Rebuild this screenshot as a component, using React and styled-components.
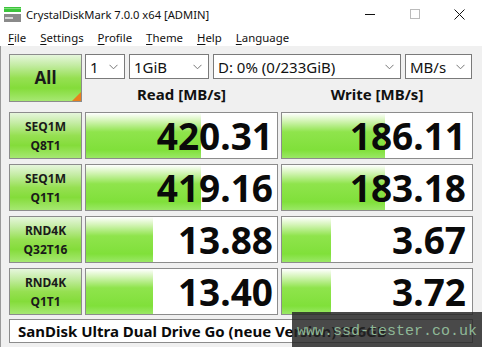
import React from 'react'
import styled, { createGlobalStyle } from 'styled-components'

const Global = createGlobalStyle`
  html, body { margin: 0; padding: 0; background: #fff; }
  body { font-family: "Noto Sans", "Open Sans", sans-serif; }
`

const Window = styled.div`
  width: 482px;
  height: 347px;
  background: #fff;
  position: relative;
  overflow: hidden;
  display: flex;
  flex-direction: column;
`

const TitleBar = styled.div`
  height: 28px;
  display: flex;
  align-items: center;
  padding-left: 4px;
  font-size: 11.2px;
  color: #111;
  .title { margin-left: 5px; flex: 1; }
`

const WinBtn = styled.div`
  width: 45px;
  height: 28px;
  display: flex;
  align-items: center;
  justify-content: center;
`

const MenuBar = styled.div`
  height: 18px;
  display: flex;
  align-items: center;
  padding-left: 1px;
  font-size: 11.4px;
  color: #111;
  span {
    padding: 0 7px;
  }
  u { text-decoration: underline; text-underline-offset: 2px; }
`

const Main = styled.div`
  flex: 1;
  background: #f0f0f0;
  border-left: 1px solid #9a9a9a;
  padding: 8px 0 0 8px;
  display: flex;
  flex-direction: column;
`

const Grid = styled.div`
  display: grid;
  grid-template-columns: 73px 193px 192px;
  column-gap: 3px;
`

const Controls = styled.div`
  grid-column: 2 / 4;
  display: grid;
  grid-template-columns: 193px 192px;
  column-gap: 3px;
  grid-template-rows: 25px 28px;
`

const Selects = styled.div`
  grid-column: 1 / 3;
  display: flex;
  gap: 4px;
`

const Select = styled.div`
  width: ${p => p.w}px;
  height: 25px;
  box-sizing: border-box;
  background: #fff;
  border: 1px solid #7a7a7a;
  display: flex;
  align-items: center;
  padding: 0 6px 0 4px;
  font-size: 15px;
  color: #111;
  span { flex: 1; white-space: nowrap; }
`

const Header = styled.div`
  display: flex;
  align-items: center;
  justify-content: center;
  font-size: 15px;
  font-weight: 700;
  color: #111;
  padding-top: 2px;
`

const GreenButton = styled.div`
  box-sizing: border-box;
  height: ${p => p.h}px;
  border: 1px solid #8c8c8c;
  background: linear-gradient(to bottom, #e6f6dc 0%, #c4eca4 22%, #96e052 50%, #84dc3a 72%, #a6e872 100%);
  position: relative;
  display: flex;
  flex-direction: column;
  align-items: center;
  justify-content: center;
  font-weight: 700;
  color: #1a1a1a;
  font-size: ${p => p.fs}px;
  line-height: ${p => p.lh}px;
`

const Corner = styled.div`
  position: absolute;
  right: 0;
  bottom: 0;
  width: 0;
  height: 0;
  border-left: 9px solid transparent;
  border-bottom: 9px solid #e8801e;
`

const Rows = styled.div`
  display: grid;
  grid-template-columns: 73px 193px 192px;
  column-gap: 3px;
  row-gap: 5px;
  margin-top: 5px;
`

const Cell = styled.div`
  box-sizing: border-box;
  height: 47px;
  border: 1px solid #8c8c8c;
  background: #fff;
  position: relative;
  display: flex;
  align-items: center;
  justify-content: flex-end;
  padding-right: ${p => p.pr}px;
`

const Bar = styled.div`
  position: absolute;
  left: 0;
  top: 0;
  bottom: 0;
  background: linear-gradient(to bottom, #ffffff 0%, #d2f4b4 18%, #8fe44c 42%, #80e03a 82%, #9ae866 100%);
`

const Value = styled.div`
  position: relative;
  font-size: 37px;
  font-weight: 700;
  color: #0a0a0a;
  line-height: 1;
`

const Footer = styled.div`
  box-sizing: border-box;
  width: 464px;
  height: 24px;
  margin-top: 4px;
  background: #fff;
  border: 1px solid #8c8c8c;
  display: flex;
  align-items: center;
  padding-left: 8px;
  font-size: 15px;
  font-weight: 700;
  color: #0a0a0a;
  white-space: nowrap;
`

const Watermark = styled.div`
  position: absolute;
  left: 292px;
  top: 312px;
  width: 190px;
  height: 35px;
  background: rgba(38, 38, 38, 0.84);
  display: flex;
  align-items: center;
  padding-left: 5px;
  box-sizing: border-box;
  font-family: "Liberation Mono", "DejaVu Sans Mono", monospace;
  font-size: 15px;
  color: #8fb897;
  padding-top: 3px;
`

const Chevron = () => (
  <svg width="9" height="6" viewBox="0 0 9 6">
    <path d="M0.5 0.8 L4.5 4.8 L8.5 0.8" fill="none" stroke="#777" strokeWidth="1" />
  </svg>
)

const AppIcon = () => (
  <svg width="17" height="17" viewBox="0 0 17 17">
    <rect x="0" y="1" width="17" height="5" fill="#3cc43c" />
    <rect x="0" y="2" width="17" height="1" fill="#7ee07a" />
    <rect x="0" y="8" width="17" height="8" fill="#8a8a8a" />
    <rect x="1" y="11" width="8" height="2" fill="#d8d8d8" />
  </svg>
)

const rows = [
  { a: 'SEQ1M', b: 'Q8T1', r: '420.31', rw: 60, w: '186.11', ww: 54 },
  { a: 'SEQ1M', b: 'Q1T1', r: '419.16', rw: 60, w: '183.18', ww: 54 },
  { a: 'RND4K', b: 'Q32T16', r: '13.88', rw: 35, w: '3.67', ww: 26 },
  { a: 'RND4K', b: 'Q1T1', r: '13.40', rw: 35, w: '3.72', ww: 26 },
]

export default function App() {
  return (
    <Window>
      <Global />
      <TitleBar>
        <AppIcon />
        <span className="title">CrystalDiskMark 7.0.0 x64 [ADMIN]</span>
        <WinBtn>
          <svg width="10" height="10" viewBox="0 0 10 10"><path d="M0 5.5 H10" stroke="#111" strokeWidth="1" /></svg>
        </WinBtn>
        <WinBtn>
          <svg width="10" height="10" viewBox="0 0 10 10"><rect x="0.5" y="0.5" width="9" height="9" fill="none" stroke="#bbb" strokeWidth="1" /></svg>
        </WinBtn>
        <WinBtn>
          <svg width="11" height="11" viewBox="0 0 11 11"><path d="M0.5 0.5 L10.5 10.5 M10.5 0.5 L0.5 10.5" stroke="#111" strokeWidth="1" /></svg>
        </WinBtn>
      </TitleBar>
      <MenuBar>
        <span><u>F</u>ile</span>
        <span><u>S</u>ettings</span>
        <span><u>P</u>rofile</span>
        <span><u>T</u>heme</span>
        <span><u>H</u>elp</span>
        <span><u>L</u>anguage</span>
      </MenuBar>
      <Main>
        <Grid>
          <GreenButton h={48} fs={17} lh={20}>
            All
            <Corner />
          </GreenButton>
          <Controls>
            <Selects>
              <Select w={40}><span>1</span><Chevron /></Select>
              <Select w={80}><span>1GiB</span><Chevron /></Select>
              <Select w={188}><span>D: 0% (0/233GiB)</span><Chevron /></Select>
              <Select w={67}><span>MB/s</span><Chevron /></Select>
            </Selects>
            <Header>Read [MB/s]</Header>
            <Header>Write [MB/s]</Header>
          </Controls>
        </Grid>
        <Rows>
          {rows.map((row, i) => (
            <React.Fragment key={i}>
              <GreenButton h={47} fs={12} lh={19}>
                <div>{row.a}</div>
                <div>{row.b}</div>
              </GreenButton>
              <Cell pr={4}>
                <Bar style={{ width: row.rw + '%' }} />
                <Value>{row.r}</Value>
              </Cell>
              <Cell pr={6}>
                <Bar style={{ width: row.ww + '%' }} />
                <Value>{row.w}</Value>
              </Cell>
            </React.Fragment>
          ))}
        </Rows>
        <Footer>SanDisk Ultra Dual Drive Go (neue Version) 256GB</Footer>
      </Main>
      <Watermark>www.ssd-tester.co.uk</Watermark>
    </Window>
  )
}
